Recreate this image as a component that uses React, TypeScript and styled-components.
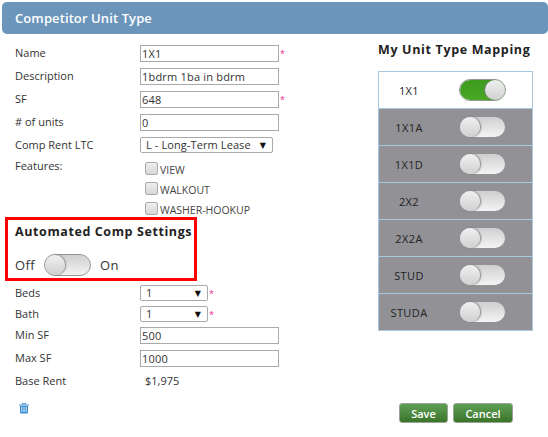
import React from "react";
import styled, { createGlobalStyle } from "styled-components";

const GlobalStyle = createGlobalStyle`
  html, body {
    margin: 0;
    padding: 0;
    background: #fff;
    font-family: "Open Sans", "DejaVu Sans", sans-serif;
  }
`;

const units = ["1X1", "1X1A", "1X1D", "2X2", "2X2A", "STUD", "STUDA"];

const App: React.FC = () => {
  return (
    <Page>
      <GlobalStyle />
      <Header>Competitor Unit Type</Header>
      <Body>
        <LeftColumn>
          <Row>
            <Label>Name</Label>
            <TextBox defaultValue="1X1" />
            <Required>*</Required>
          </Row>
          <Row>
            <Label>Description</Label>
            <TextBox defaultValue="1bdrm 1ba in bdrm" />
          </Row>
          <Row>
            <Label>SF</Label>
            <TextBox defaultValue="648" />
            <Required>*</Required>
          </Row>
          <Row>
            <Label># of units</Label>
            <TextBox defaultValue="0" />
          </Row>
          <Row>
            <Label>Comp Rent LTC</Label>
            <FakeSelect $width={133}>
              L - Long-Term Lease
              <Arrow>▼</Arrow>
            </FakeSelect>
          </Row>
          <FeatureRow>
            <FeatureLabel>Features:</FeatureLabel>
            <FeatureList>
              {["VIEW", "WALKOUT", "WASHER-HOOKUP"].map((f) => (
                <Feature key={f}>
                  <Check />
                  {f}
                </Feature>
              ))}
            </FeatureList>
          </FeatureRow>
          <Highlight>
            <HighlightTitle>Automated Comp Settings</HighlightTitle>
            <OffOn>
              Off
              <Toggle $outlined>
                <Knob />
              </Toggle>
              On
            </OffOn>
          </Highlight>
          <CompactRow>
            <Label>Beds</Label>
            <FakeSelect $width={68}>
              1<Arrow>▼</Arrow>
            </FakeSelect>
            <Required>*</Required>
          </CompactRow>
          <CompactRow>
            <Label>Bath</Label>
            <FakeSelect $width={68}>
              1<Arrow>▼</Arrow>
            </FakeSelect>
            <Required>*</Required>
          </CompactRow>
          <Row>
            <Label>Min SF</Label>
            <TextBox defaultValue="500" />
          </Row>
          <Row>
            <Label>Max SF</Label>
            <TextBox defaultValue="1000" />
          </Row>
          <BaseRentRow>
            <Label>Base Rent</Label>
            <RentValue>$1,975</RentValue>
          </BaseRentRow>
          <TrashIcon viewBox="0 0 12 12" aria-label="delete">
            <path d="M1 2.4h10v1H1zM4 1h4v1.4H7.2v-.6H4.8v.6H4z" fill="#3d8fd6" />
            <path d="M2 4h8v6.4c0 .6-.5 1-1 1H3c-.5 0-1-.4-1-1z" fill="#3d8fd6" />
            <path d="M3.8 5v5M6 5v5M8.2 5v5" stroke="#fff" strokeWidth=".8" />
          </TrashIcon>
        </LeftColumn>
        <RightColumn>
          <MappingTitle>My Unit Type Mapping</MappingTitle>
          <MappingTable>
            {units.map((u, i) => (
              <MappingRow key={u} $active={i === 0}>
                <MappingName>{u}</MappingName>
                <Toggle $on={i === 0} $outlined={i === 0}>
                  <Knob $on={i === 0} />
                </Toggle>
              </MappingRow>
            ))}
          </MappingTable>
          <Actions>
            <GreenButton $width={49}>Save</GreenButton>
            <GreenButton $width={60}>Cancel</GreenButton>
          </Actions>
        </RightColumn>
      </Body>
    </Page>
  );
};

const Page = styled.div`
  width: 548px;
  height: 437px;
  overflow: hidden;
  padding-top: 2px;
  padding-left: 2px;
  box-sizing: border-box;
  color: #333;
  font-size: 11px;
`;

const Header = styled.div`
  height: 32px;
  line-height: 32px;
  padding-left: 13px;
  background: #6b95bb;
  border-radius: 5px;
  color: #fff;
  font-size: 13px;
  font-weight: 600;
  letter-spacing: 0.1px;
`;

const Body = styled.div`
  display: flex;
`;

const LeftColumn = styled.div`
  width: 376px;
  padding-top: 11px;
  box-sizing: border-box;
`;

const Row = styled.div`
  display: flex;
  align-items: flex-start;
  height: 17px;
  margin-bottom: 6px;
`;

const CompactRow = styled(Row)`
  height: 15px;
`;

const BaseRentRow = styled(Row)`
  margin-bottom: 0;
`;

const Label = styled.div`
  width: 125px;
  margin-left: 13px;
  padding-top: 1px;
  line-height: 14px;
`;

const FeatureLabel = styled(Label)`
  padding-top: 0;
  line-height: 12px;
`;

const TextBox = styled.input`
  width: 139px;
  height: 17px;
  box-sizing: border-box;
  padding: 1px;
  border: 1px solid #a9a9a9;
  font: 11px "Open Sans", sans-serif;
  letter-spacing: 0.2px;
  color: #333;
  outline: none;
`;

const Required = styled.span`
  margin-left: 1px;
  padding-top: 2px;
  color: #e8308a;
  font-size: 9px;
  line-height: 14px;
`;

const FakeSelect = styled.div<{ $width: number }>`
  position: relative;
  width: ${(p) => p.$width}px;
  height: 16px;
  box-sizing: border-box;
  padding-left: 5px;
  border: 1px solid #a9a9a9;
  border-radius: 2px;
  line-height: 14px;
  font-size: 11px;
  letter-spacing: 0.1px;
`;

const Arrow = styled.span`
  position: absolute;
  right: 6px;
  top: 0;
  color: #111;
  font-size: 8px;
`;

const FeatureRow = styled.div`
  display: flex;
  align-items: flex-start;
`;

const FeatureList = styled.div`
  display: flex;
  flex-direction: column;
  gap: 5px;
  padding: 2px 0 0 5px;
`;

const Feature = styled.div`
  display: flex;
  align-items: center;
  height: 15px;
  font-size: 10.5px;
  gap: 2px;
  color: #444;
`;

const Check = styled.span`
  width: 11px;
  height: 11px;
  margin-top: -3px;
  border: 1px solid #aaa;
  border-radius: 2px;
  background: linear-gradient(#eee, #d8d8d8);
`;

const Highlight = styled.div`
  width: 192px;
  height: 64px;
  margin: 0 0 4px 3px;
  padding: 3px 0 0 7px;
  box-sizing: border-box;
  border: 3px solid #f00;
`;

const HighlightTitle = styled.div`
  font-size: 12.5px;
  font-weight: 700;
  color: #222;
  letter-spacing: 0.6px;
  line-height: 17px;
`;

const OffOn = styled.div`
  display: flex;
  align-items: center;
  gap: 9px;
  margin-top: 14px;
  font-size: 13px;
  line-height: 20px;
  letter-spacing: 0.4px;
`;

const Toggle = styled.div<{ $on?: boolean; $outlined?: boolean }>`
  display: flex;
  justify-content: ${(p) => (p.$on ? "flex-end" : "flex-start")};
  width: 47px;
  height: 22px;
  box-sizing: border-box;
  border-radius: 11px;
  border: 1px solid ${(p) => (p.$outlined ? "#8f9a8f" : "transparent")};
  background: ${(p) =>
    p.$on ? "linear-gradient(#3c9a1e, #4aa826)" : "linear-gradient(#cfcfcf, #f4f4f4)"};
  background-clip: padding-box;
`;

const Knob = styled.div<{ $on?: boolean }>`
  width: 20px;
  height: 20px;
  border-radius: 50%;
  background: linear-gradient(#f0f0f0, #d0d0d0);
  box-shadow: ${(p) => (p.$on ? "-1px 0 1px #777" : "1px 0 2px #777")};
`;

const RentValue = styled.div`
  margin-left: 5px;
  padding-top: 1px;
  line-height: 14px;
`;

const TrashIcon = styled.svg`
  display: block;
  width: 12px;
  height: 12px;
  margin: 12px 0 0 16px;
`;

const RightColumn = styled.div`
  width: 155px;
  display: flex;
  flex-direction: column;
`;

const MappingTitle = styled.div`
  margin-top: 6px;
  height: 20px;
  line-height: 20px;
  font-size: 12.5px;
  font-weight: 700;
  letter-spacing: 0.65px;
  color: #222;
  white-space: nowrap;
`;

const MappingTable = styled.div`
  margin-top: 11px;
  border: 1px solid #a6c9e2;
`;

const MappingRow = styled.div<{ $active: boolean }>`
  display: flex;
  align-items: center;
  height: 37px;
  box-sizing: border-box;
  background: ${(p) => (p.$active ? "#fff" : "#929296")};
  border-top: 1px solid #a6c9e2;
  &:first-child {
    border-top: none;
    height: 36px;
  }
`;

const MappingName = styled.div`
  width: 60px;
  margin-right: 20px;
  text-align: center;
  letter-spacing: 0.4px;
  color: #222;
`;

const Actions = styled.div`
  display: flex;
  gap: 5px;
  margin: 72px 0 0 21px;
`;

const GreenButton = styled.button<{ $width: number }>`
  width: ${(p) => p.$width}px;
  height: 20px;
  padding: 0;
  border: 1px solid #9aa59a;
  border-radius: 3px;
  background: linear-gradient(#5fa055, #3a7429);
  color: #fff;
  font: 600 11px "Open Sans", sans-serif;
`;

export default App;
